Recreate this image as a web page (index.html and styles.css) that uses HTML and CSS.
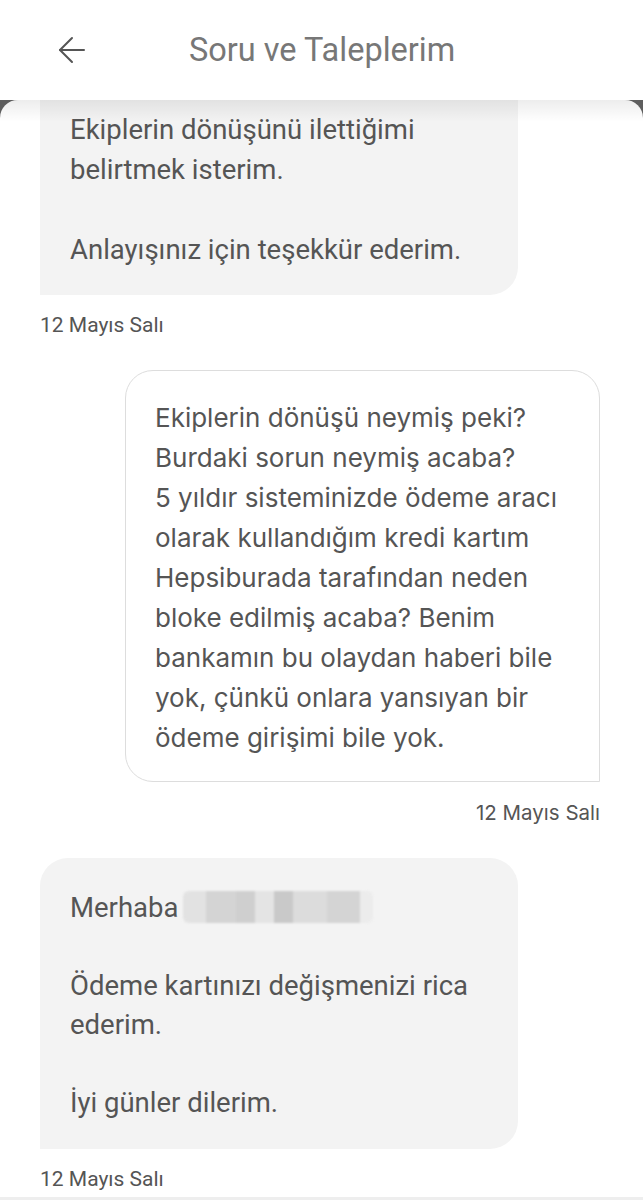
FILE: index.html
```html
<!DOCTYPE html>
<html lang="tr">

<head>
    <meta charset="UTF-8">
    <meta name="viewport" content="width=device-width, initial-scale=1.0">
    <title>Soru ve Taleplerim</title>
    <link rel="stylesheet" href="styles.css">
</head>

<body>
    <header class="topbar">
        <button class="back" type="button" aria-label="Geri">
            <svg width="28" height="28" viewBox="0 0 28 28" fill="none" stroke="#555" stroke-width="2" stroke-linecap="round" stroke-linejoin="round">
                <path d="M26 14H2"/>
                <path d="M14 2L2 14l12 12"/>
            </svg>
        </button>
        <h1 class="title">Soru ve Taleplerim</h1>
    </header>

    <div class="sheet-wrap">
        <main class="sheet">
            <div class="bubble incoming first">
                <p>Ekiplerin dönüşünü ilettiğimi<br>belirtmek isterim.</p>
                <p>Anlayışınız için teşekkür ederim.</p>
            </div>
            <div class="date">12 Mayıs Salı</div>

            <div class="bubble outgoing">
                <p>Ekiplerin dönüşü neymiş peki?<br>Burdaki sorun neymiş acaba?<br>5 yıldır sisteminizde ödeme aracı<br>olarak kullandığım kredi kartım<br>Hepsiburada tarafından neden<br>bloke edilmiş acaba? Benim<br>bankamın bu olaydan haberi bile<br>yok, çünkü onlara yansıyan bir<br>ödeme girişimi bile yok.</p>
            </div>
            <div class="date right">12 Mayıs Salı</div>

            <div class="bubble incoming last">
                <p>Merhaba <span class="blurred" aria-hidden="true"></span></p>
                <p>Ödeme kartınızı değişmenizi rica<br>ederim.</p>
                <p>İyi günler dilerim.</p>
            </div>
            <div class="date">12 Mayıs Salı</div>
        </main>
    </div>
</body>

</html>
```

FILE: styles.css
```css
* {
    box-sizing: border-box;
}

body {
    margin: 0;
    background-color: #fff;
    font-family: Roboto, "Liberation Sans", sans-serif;
    color: #555;
}

.topbar {
    height: 100px;
    display: flex;
    align-items: center;
    padding-left: 58px;
    background-color: #fff;
}

.back {
    border: none;
    background: none;
    padding: 0;
    width: 28px;
    height: 28px;
    cursor: pointer;
}

.title {
    margin: 0 0 0 103px;
    font-size: 32.5px;
    font-weight: 400;
    color: #777;
}

.sheet-wrap {
    background-color: #5e5e5e;
}

.sheet {
    position: relative;
    background-color: #fff;
    border-radius: 18px 18px 0 0;
    padding: 0 43px 0 40px;
    height: 1100px;
    overflow: hidden;
    border-bottom: 3px solid #eee;
}

.sheet::before {
    content: "";
    position: absolute;
    left: 0;
    right: 0;
    top: 0;
    height: 22px;
    border-radius: 18px 18px 0 0;
    background: linear-gradient(rgba(0, 0, 0, 0.07), rgba(0, 0, 0, 0));
}

.bubble {
    width: 478px;
    font-size: 27.5px;
    line-height: 40px;
}

.bubble p {
    margin: 0;
    white-space: nowrap;
}

.bubble p + p {
    margin-top: 40px;
}

.incoming {
    background-color: #f3f3f3;
    padding: 0 30px;
    border-radius: 28px 28px 28px 0;
}

.first {
    padding-top: 10px;
    padding-bottom: 25px;
    border-radius: 0 0 28px 0;
}

.last {
    margin-top: 33px;
    padding-top: 30px;
    padding-bottom: 27px;
    line-height: 39px;
}

.last p + p {
    margin-top: 39px;
}

.outgoing {
    margin: 33px 0 0 auto;
    width: 475px;
    padding: 27px 20px 23px 29px;
    border: 1px solid #ddd;
    border-radius: 28px 28px 0 28px;
    font-family: Inter, "Noto Sans", sans-serif;
    font-size: 26px;
}

.date {
    margin-top: 18px;
    font-size: 21px;
    line-height: 24px;
}

.date.right {
    margin-top: 19px;
    text-align: right;
    font-family: Inter, "Noto Sans", sans-serif;
    font-size: 20.5px;
}

.blurred {
    display: inline-block;
    vertical-align: -6px;
    margin-left: -2px;
    width: 190px;
    height: 32px;
    border-radius: 6px;
    background: linear-gradient(90deg, #e2e2e2 0 12%, #d4d4d4 12% 28%, #cfcfcf 28% 38%, #e4e4e4 38% 48%, #c9c9c9 48% 58%, #dcdcdc 58% 76%, #d4d4d4 76% 93%, #ececec 93%);
    filter: blur(1.2px);
}
```
